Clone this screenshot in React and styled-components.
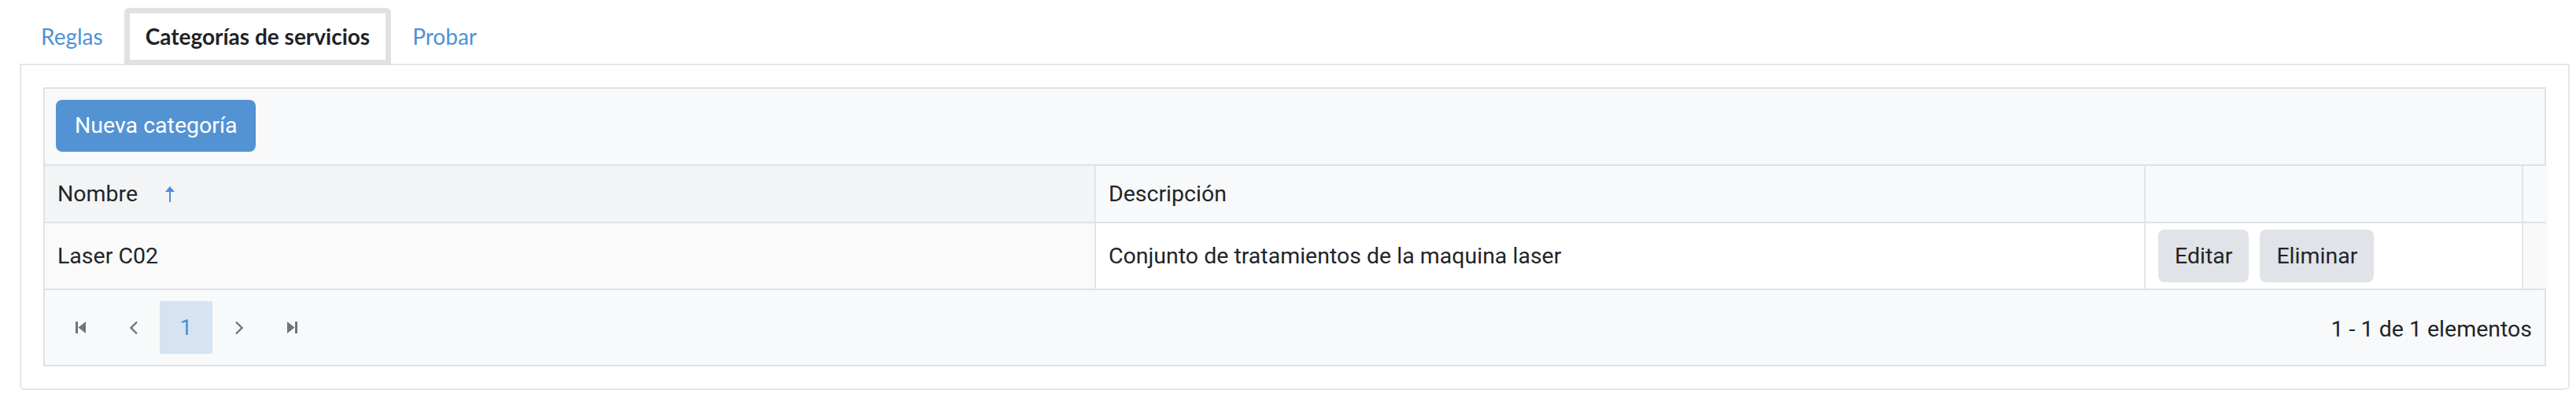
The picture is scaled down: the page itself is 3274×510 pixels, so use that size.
import React from "react";
import styled, { createGlobalStyle } from "styled-components";

const GlobalStyle = createGlobalStyle`
  html, body { margin: 0; padding: 0; background: #ffffff; }
  * { box-sizing: border-box; }
`;

const Page = styled.div`
  padding: 10px 8px 15px 25px;
`;

const TabList = styled.div`
  display: flex;
  align-items: flex-end;
  font-family: Lato, "Open Sans", sans-serif;
  font-size: 28px;
`;

const Tab = styled.div`
  position: relative;
  z-index: 1;
  margin-bottom: -2px;
  height: 73px;
  padding: 8px 20px 8px;
  line-height: 43px;
  border: 7px solid ${(p) => (p.$active ? "#e1e1e1" : "transparent")};
  border-radius: 6px 6px 0 0;
  background: ${(p) => (p.$active ? "#ffffff" : "transparent")};
  color: ${(p) => (p.$active ? "#1f2327" : "#4f91d6")};
  font-weight: ${(p) => (p.$active ? 700 : 400)};
  white-space: nowrap;
`;

const Panel = styled.div`
  border: 2px solid #e6e6e6;
  border-radius: 0 0 6px 6px;
  padding: 28px;
`;

const Grid = styled.div`
  border: 2px solid #dee2e6;
  background: #f8f9fa;
  font-family: Roboto, "Liberation Sans", sans-serif;
  font-size: 28.5px;
  color: #212529;
`;

const Toolbar = styled.div`
  display: flex;
  padding: 14px 14px 16px;
  border-bottom: 2px solid #dee2e6;
`;

const PrimaryButton = styled.button`
  height: 66px;
  padding: 0 24px;
  border: none;
  border-radius: 8px;
  background: #5393d3;
  color: #ffffff;
  font-family: inherit;
  font-size: 28.5px;
  line-height: 40px;
`;

const Row = styled.div`
  display: grid;
  grid-template-columns: 1336px 1334px 480px 1fr;
  border-bottom: 2px solid #dee2e6;
`;

const HeaderCell = styled.div`
  display: flex;
  align-items: center;
  height: 71px;
  padding: 0 16px;
  line-height: 40px;
  background: ${(p) => (p.$sorted ? "#f3f4f6" : "#f8f9fa")};
  border-right: ${(p) => (p.$last ? "none" : "2px solid #e2e4e7")};
`;

const Cell = styled.div`
  display: flex;
  align-items: center;
  gap: 14px;
  height: 83px;
  padding: 8px 16px;
  line-height: 40px;
  background: ${(p) => (p.$sorted ? "#fafafa" : p.$gutter ? "#f9f9f9" : "#ffffff")};
  border-right: ${(p) => (p.$last ? "none" : "2px solid #e2e4e7")};
`;

const SortIcon = styled.svg`
  margin-left: 35px;
  width: 12px;
  height: 20px;
  flex: none;
`;

const GhostButton = styled.button`
  height: 67px;
  padding: 0 21px;
  border: none;
  border-radius: 8px;
  background: #e0e3e7;
  color: #212529;
  font-family: inherit;
  font-size: 28.5px;
  line-height: 40px;
`;

const Pager = styled.div`
  display: flex;
  align-items: center;
  justify-content: space-between;
  padding: 14px 16px 14px 12px;
`;

const PagerNav = styled.div`
  display: flex;
`;

const PagerButton = styled.div`
  display: flex;
  align-items: center;
  justify-content: center;
  width: 67px;
  height: 67px;
  color: ${(p) => (p.$selected ? "#4a90d9" : "#6c757d")};
  background: ${(p) => (p.$selected ? "#d6e4f2" : "transparent")};
  font-size: 28.5px;
`;

const PagerInfo = styled.div`
  line-height: 40px;
  margin-top: 4px;
`;

const FirstIcon = () => (
  <svg width="14" height="15" viewBox="0 0 14 15">
    <rect x="0" y="0" width="3" height="15" fill="currentColor" />
    <polygon points="13,0 13,15 3.5,7.5" fill="currentColor" />
  </svg>
);

const LastIcon = () => (
  <svg width="14" height="15" viewBox="0 0 14 15">
    <polygon points="1,0 1,15 10.5,7.5" fill="currentColor" />
    <rect x="11" y="0" width="3" height="15" fill="currentColor" />
  </svg>
);

const PrevIcon = () => (
  <svg width="12" height="18" viewBox="0 0 12 18">
    <polyline points="10,1.5 2.5,9 10,16.5" fill="none" stroke="currentColor" strokeWidth="2.4" />
  </svg>
);

const NextIcon = () => (
  <svg width="12" height="18" viewBox="0 0 12 18">
    <polyline points="2,1.5 9.5,9 2,16.5" fill="none" stroke="currentColor" strokeWidth="2.4" />
  </svg>
);

export default function App() {
  return (
    <>
      <GlobalStyle />
      <Page>
        <TabList>
          <Tab>Reglas</Tab>
          <Tab $active>Categorías de servicios</Tab>
          <Tab>Probar</Tab>
        </TabList>
        <Panel>
          <Grid>
            <Toolbar>
              <PrimaryButton>Nueva categoría</PrimaryButton>
            </Toolbar>
            <Row>
              <HeaderCell $sorted>
                Nombre
                <SortIcon viewBox="0 0 12 20">
                  <polygon points="6,0 12,7 0,7" fill="#4a90d9" />
                  <rect x="5" y="5" width="2" height="15" fill="#4a90d9" />
                </SortIcon>
              </HeaderCell>
              <HeaderCell>Descripción</HeaderCell>
              <HeaderCell />
              <HeaderCell $last />
            </Row>
            <Row>
              <Cell $sorted>Laser C02</Cell>
              <Cell>Conjunto de tratamientos de la maquina laser</Cell>
              <Cell>
                <GhostButton>Editar</GhostButton>
                <GhostButton>Eliminar</GhostButton>
              </Cell>
              <Cell $gutter $last />
            </Row>
            <Pager>
              <PagerNav>
                <PagerButton><FirstIcon /></PagerButton>
                <PagerButton><PrevIcon /></PagerButton>
                <PagerButton $selected>1</PagerButton>
                <PagerButton><NextIcon /></PagerButton>
                <PagerButton><LastIcon /></PagerButton>
              </PagerNav>
              <PagerInfo>1 - 1 de 1 elementos</PagerInfo>
            </Pager>
          </Grid>
        </Panel>
      </Page>
    </>
  );
}
